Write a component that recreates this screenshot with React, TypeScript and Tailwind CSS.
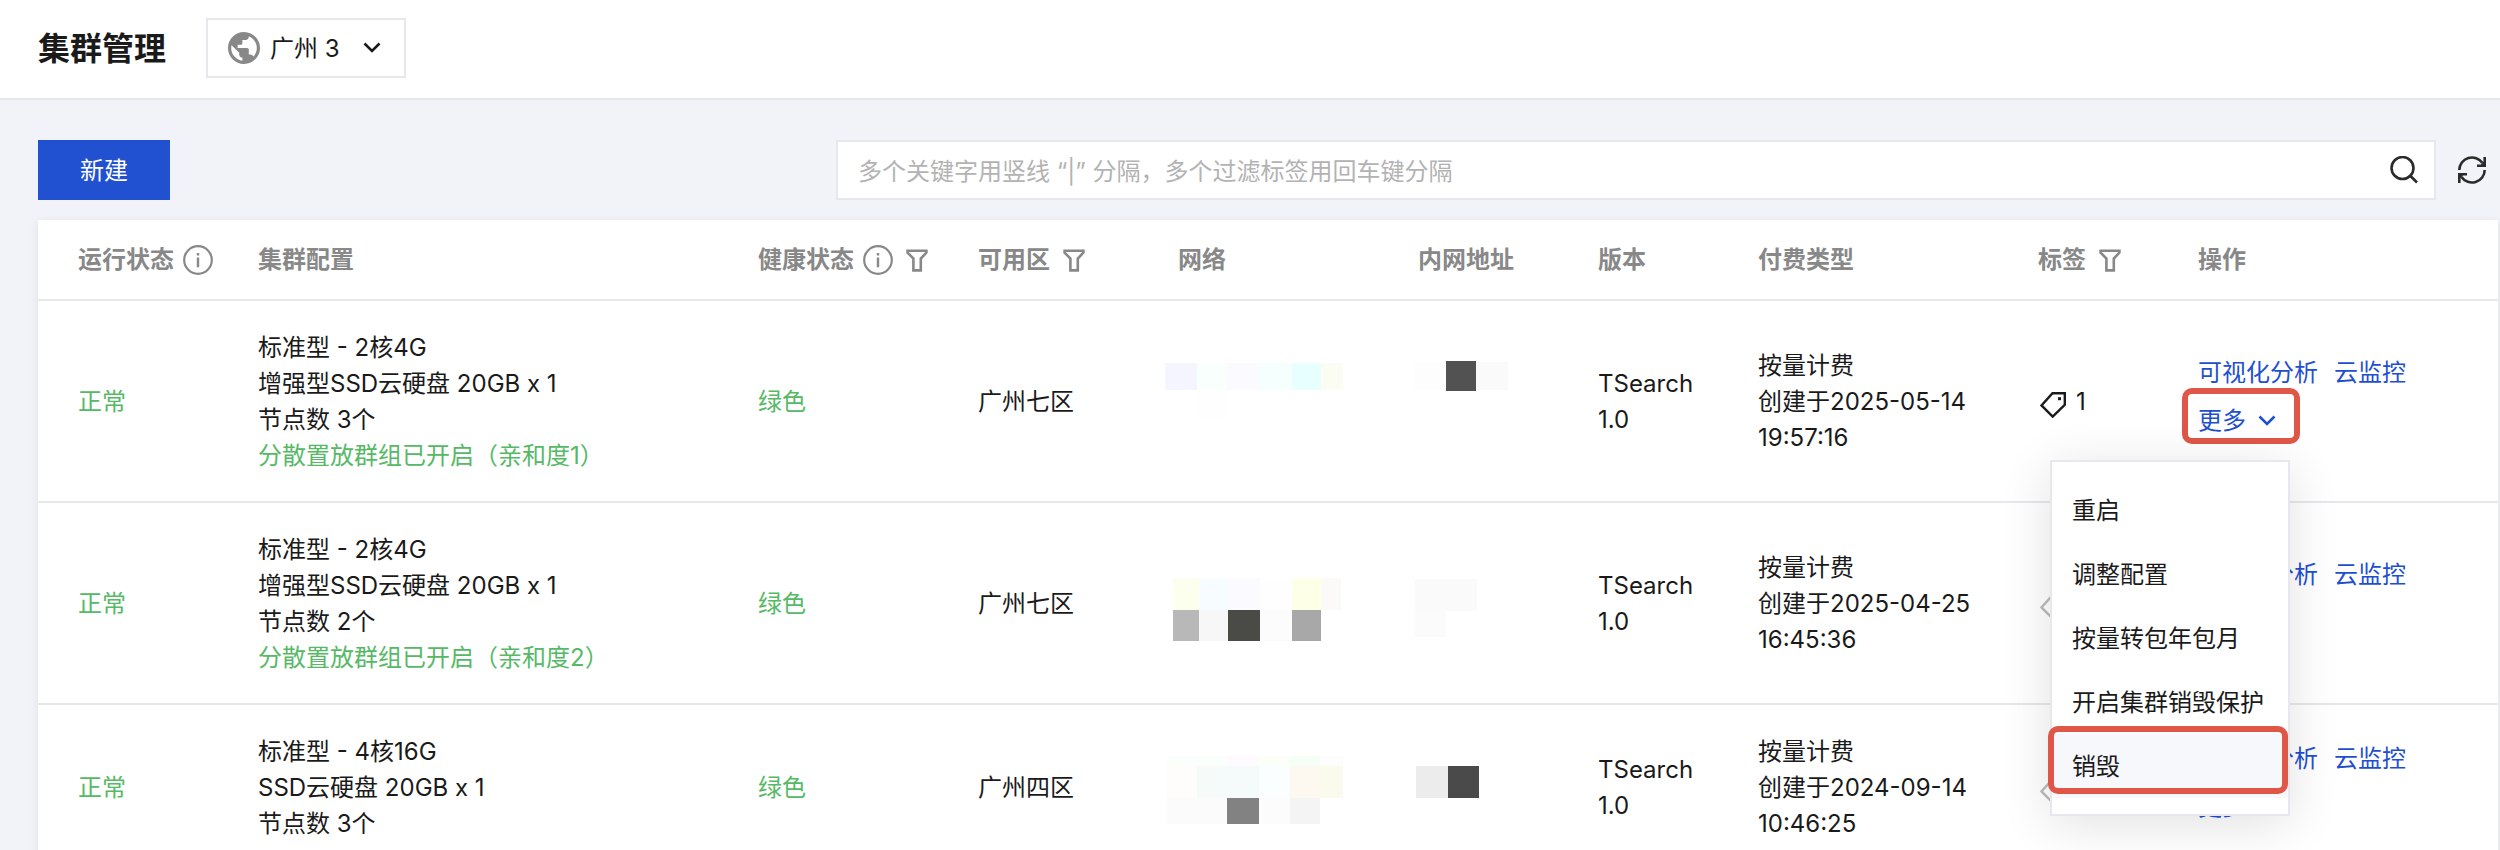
import React from 'react';
import clsx from 'clsx';

interface Block {
  x: number;
  y: number;
  w: number;
  h: number;
  fill: string;
}

interface Cluster {
  id: string;
  status: string;
  config: string[];
  placement?: string;
  health: string;
  zone: string;
  network: Block[];
  address: Block[];
  version: string;
  billing: string;
  createdAt: string;
  tagCount: number;
}

// Masked values: [x, y, width, height, fill]
const toBlocks = (items: [number, number, number, number, string][]): Block[] =>
  items.map(([x, y, w, h, fill]) => ({ x, y, w, h, fill }));

const clusters: Cluster[] = [
  {
    id: 'c1',
    status: '正常',
    config: ['标准型 - 2核4G', '增强型SSD云硬盘 20GB x 1', '节点数 3个'],
    placement: '分散置放群组已开启（亲和度1）',
    health: '绿色',
    zone: '广州七区',
    network: toBlocks([
      [3, 16, 32, 27, '#f5f5ff'],
      [35, 16, 30, 27, '#f9fffc'],
      [65, 16, 32, 27, '#fbfbff'],
      [97, 16, 33, 27, '#f4fffe'],
      [130, 16, 29, 27, '#e8ffff'],
      [159, 16, 22, 27, '#fbfcf4'],
      [35, 43, 30, 31, '#fefefe'],
    ]),
    address: toBlocks([
      [13, 15, 31, 28, '#fdfdfd'],
      [44, 14, 30, 30, '#525252'],
      [74, 15, 32, 28, '#fafafa'],
    ]),
    version: 'TSearch 1.0',
    billing: '按量计费',
    createdAt: '2025-05-14 19:57:16',
    tagCount: 1,
  },
  {
    id: 'c2',
    status: '正常',
    config: ['标准型 - 2核4G', '增强型SSD云硬盘 20GB x 1', '节点数 2个'],
    placement: '分散置放群组已开启（亲和度2）',
    health: '绿色',
    zone: '广州七区',
    network: toBlocks([
      [11, 29, 26, 32, '#fdffee'],
      [37, 29, 29, 32, '#f6fcff'],
      [66, 29, 32, 32, '#fbfaff'],
      [98, 29, 32, 32, '#fefefe'],
      [130, 29, 29, 32, '#fdffe6'],
      [159, 29, 20, 32, '#fbfaf8'],
      [11, 61, 26, 31, '#b8b8b8'],
      [37, 61, 29, 31, '#f7f7f7'],
      [66, 61, 32, 31, '#4a4a47'],
      [98, 61, 32, 31, '#fcfcfc'],
      [130, 61, 29, 31, '#a8a8a8'],
    ]),
    address: toBlocks([
      [13, 30, 31, 32, '#fafafa'],
      [44, 30, 31, 32, '#fafafa'],
      [13, 62, 31, 26, '#fbfbfb'],
    ]),
    version: 'TSearch 1.0',
    billing: '按量计费',
    createdAt: '2025-04-25 16:45:36',
    tagCount: 0,
  },
  {
    id: 'c3',
    status: '正常',
    config: ['标准型 - 4核16G', 'SSD云硬盘 20GB x 1', '节点数 3个'],
    health: '绿色',
    zone: '广州四区',
    network: toBlocks([
      [5, 23, 60, 10, '#fbfffb'],
      [65, 23, 32, 10, '#fefbfe'],
      [97, 23, 31, 10, '#fcfff8'],
      [128, 23, 30, 10, '#f6fff5'],
      [158, 23, 23, 10, '#fdfdfd'],
      [5, 33, 30, 32, '#fffdfb'],
      [35, 33, 30, 32, '#f6fbf9'],
      [65, 33, 32, 32, '#f4fbfa'],
      [97, 33, 31, 32, '#fbfefe'],
      [128, 33, 30, 32, '#fdf9f1'],
      [158, 33, 23, 32, '#fafbed'],
      [5, 65, 60, 26, '#fbfbfb'],
      [65, 65, 32, 26, '#828282'],
      [97, 65, 31, 26, '#fcfcfc'],
      [128, 65, 30, 26, '#f4f4f4'],
    ]),
    address: toBlocks([
      [14, 33, 32, 32, '#ececec'],
      [46, 33, 31, 32, '#4a4a4a'],
    ]),
    version: 'TSearch 1.0',
    billing: '按量计费',
    createdAt: '2024-09-14 10:46:25',
    tagCount: 0,
  },
];

const menuItems = ['重启', '调整配置', '按量转包年包月', '开启集群销毁保护', '销毁'];

const columns = [
  { key: 'status', label: '运行状态', width: 'w-[200px]', info: true },
  { key: 'config', label: '集群配置', width: 'w-[500px]' },
  { key: 'health', label: '健康状态', width: 'w-[220px]', info: true, filter: true },
  { key: 'zone', label: '可用区', width: 'w-[200px]', filter: true },
  { key: 'network', label: '网络', width: 'w-[240px]' },
  { key: 'address', label: '内网地址', width: 'w-[180px]' },
  { key: 'version', label: '版本', width: 'w-[160px]' },
  { key: 'billing', label: '付费类型', width: 'w-[280px]' },
  { key: 'tags', label: '标签', width: 'w-[160px]', filter: true },
  { key: 'actions', label: '操作', width: 'w-[320px]' },
];

const GlobeIcon = () => (
  <svg viewBox="2 2 20 20" className="size-8 shrink-0 text-[#888888]" fill="currentColor" aria-hidden="true">
    <path d="M12 2C6.48 2 2 6.48 2 12s4.48 10 10 10 10-4.48 10-10S17.52 2 12 2zm-1 17.93c-3.95-.49-7-3.85-7-7.93 0-.62.08-1.21.21-1.79L9 15v1c0 1.1.9 2 2 2v1.93zm6.9-2.54c-.26-.81-1-1.39-1.9-1.39h-1v-3c0-.55-.45-1-1-1H8v-2h2c.55 0 1-.45 1-1V7h2c1.1 0 2-.9 2-2v-.41c2.93 1.19 5 4.06 5 7.41 0 2.08-.8 3.97-2.1 5.39z" />
  </svg>
);

const ChevronIcon = ({ className }: { className?: string }) => (
  <svg viewBox="0 0 18 12" className={clsx('h-3 w-[18px] shrink-0', className)} fill="none" stroke="currentColor" strokeWidth="2.6" aria-hidden="true">
    <path d="M1.5 1.5 9 9 16.5 1.5" />
  </svg>
);

const InfoIcon = () => (
  <svg viewBox="0 0 30 30" className="size-[30px] shrink-0" aria-hidden="true">
    <circle cx="15" cy="15" r="13.8" fill="none" stroke="currentColor" strokeWidth="2.2" />
    <path d="M13.8 8h2.4v2.4h-2.4zM13.8 12.6h2.4v9.6h-2.4z" fill="currentColor" />
  </svg>
);

const FilterIcon = () => (
  <svg viewBox="0 0 22 24" className="h-6 w-[22px] shrink-0" fill="none" stroke="currentColor" strokeWidth="2.6" aria-hidden="true">
    <path d="M1.6 2.8h18.8v1.8l-5.6 6v11.8H7.4V10.6l-5.8-6z" />
  </svg>
);

const SearchIcon = () => (
  <svg viewBox="0 0 28 28" className="size-7" fill="none" stroke="currentColor" strokeWidth="2.6" aria-hidden="true">
    <circle cx="12.5" cy="12" r="11" />
    <path d="M20 19.5 27 26.5" />
  </svg>
);

const RefreshIcon = () => (
  <svg viewBox="0 0 28 28" className="size-7" aria-hidden="true">
    <g fill="none" stroke="currentColor" strokeWidth="2.6">
      <path d="M1.3 14A12.7 12.7 0 0 1 24.5 7" />
      <path d="M26.7 14A12.7 12.7 0 0 1 3.5 21" />
    </g>
    <g fill="currentColor">
      <path d="M28 1v10h-9V8.4h4L25.4 6V1z" />
      <path d="M0 27V17h9v2.6H5L2.6 22v5z" />
    </g>
  </svg>
);

const TagIcon = () => (
  <svg viewBox="0 0 28 32" className="h-8 w-7 shrink-0" aria-hidden="true">
    <path d="M14.5 7.2h12.3v11.6L14.7 30.6 3.5 19.4z" fill="none" stroke="currentColor" strokeWidth="2.4" />
    <path d="M20 11.2h3v3h-3z" fill="currentColor" />
  </svg>
);

function Mosaic({ blocks, label, width }: { blocks: Block[]; label: string; width: number }) {
  return (
    <svg width={width} height="108" role="img" aria-label={label} className="block">
      {blocks.map((b) => (
        <rect key={`${b.x}-${b.y}`} x={b.x} y={b.y} width={b.w} height={b.h} fill={b.fill} />
      ))}
    </svg>
  );
}

function MoreMenu() {
  return (
    <div
      role="menu"
      className="absolute -left-[148px] top-[63px] z-10 w-[240px] border-2 border-[#e7e8ee] bg-white py-4 text-[#1a1a1a] shadow-[0_8px_48px_rgba(0,0,0,0.12)]"
    >
      {menuItems.map((item) => {
        const active = item === '销毁';
        return (
          <button
            key={item}
            type="button"
            role="menuitem"
            className={clsx('relative block h-16 w-full whitespace-nowrap px-5 pt-0.5 text-left', active && 'bg-[#f6f8fc]')}
          >
            {item}
            {active && (
              <span className="pointer-events-none absolute -left-1 -top-2 bottom-1 right-0 rounded-[10px] border-[6px] border-[#df5747]" />
            )}
          </button>
        );
      })}
    </div>
  );
}

function RowActions({ open }: { open: boolean }) {
  return (
    <div className="pb-2 leading-[48px] text-[#1f4fd1]">
      <div className="flex gap-4 whitespace-nowrap">
        <a href="#analysis">可视化分析</a>
        <a href="#monitor">云监控</a>
      </div>
      <div className="relative w-fit">
        <button type="button" aria-haspopup="menu" aria-expanded={open} className="flex items-center gap-3">
          更多
          <ChevronIcon />
        </button>
        {open && (
          <>
            <span className="pointer-events-none absolute -left-4 -top-[9px] h-14 w-[118px] rounded-[10px] border-[6px] border-[#df5747]" />
            <MoreMenu />
          </>
        )}
      </div>
    </div>
  );
}

function ClusterTable() {
  return (
    <table className="w-full table-fixed border-collapse bg-white text-left shadow-[0_2px_8px_rgba(54,58,80,0.1)]">
      <thead className="text-[#888888]">
        <tr className="border-b-2 border-[#e7e8ee]">
          {columns.map((col, i) => (
            <th
              key={col.key}
              scope="col"
              className={clsx('h-20 whitespace-nowrap font-semibold', col.width, i === 0 ? 'pl-10' : 'pl-5')}
            >
              <div className="flex items-center">
                {col.label}
                {col.info && (
                  <button type="button" aria-label={`${col.label}说明`} className="ml-[9px]">
                    <InfoIcon />
                  </button>
                )}
                {col.filter && (
                  <button type="button" aria-label={`筛选${col.label}`} className="ml-[13px]">
                    <FilterIcon />
                  </button>
                )}
              </div>
            </th>
          ))}
        </tr>
      </thead>
      <tbody className="text-[#1a1a1a]">
        {clusters.map((c, i) => (
          <tr key={c.id} className="border-b-2 border-[#e7e8ee]">
            {/* Status */}
            <td className="pb-[27px] pl-10 pt-[29px] text-[#56b966]">{c.status}</td>

            {/* Config */}
            <td className="pb-[27px] pl-5 pt-[29px]">
              {c.config.map((line) => (
                <div key={line}>{line}</div>
              ))}
              {c.placement && <div className="text-[#56b966]">{c.placement}</div>}
            </td>

            {/* Health */}
            <td className="pb-[27px] pl-5 pt-[29px] text-[#56b966]">{c.health}</td>

            {/* Zone */}
            <td className="pb-[27px] pl-5 pt-[29px]">{c.zone}</td>

            {/* Network */}
            <td className="py-7 pl-1">
              <Mosaic blocks={c.network} label="网络" width={184} />
            </td>

            {/* Address */}
            <td className="py-7 pl-1">
              <Mosaic blocks={c.address} label="内网地址" width={120} />
            </td>

            {/* Version */}
            <td className="px-5 pb-[27px] pt-[29px]">{c.version}</td>

            {/* Billing */}
            <td className="px-5 pb-[27px] pt-[29px]">
              <div>{c.billing}</div>
              <div>{`创建于${c.createdAt}`}</div>
            </td>

            {/* Tags */}
            <td className="pb-[27px] pl-5 pt-[29px]">
              <div className={clsx('flex items-center gap-[10px]', c.tagCount === 0 && 'text-[#bbbbbb]')}>
                <TagIcon />
                {c.tagCount > 0 && c.tagCount}
              </div>
            </td>

            {/* Actions */}
            <td className="pl-5">
              <RowActions open={i === 0} />
            </td>
          </tr>
        ))}
      </tbody>
    </table>
  );
}

export default function App() {
  return (
    <div
      lang="zh-CN"
      className="flex h-screen flex-col overflow-hidden bg-[#f2f3f8] font-['Inter','Noto_Sans_CJK_SC',sans-serif] text-[24px] leading-[36px] text-[#1a1a1a]"
    >
      <header className="flex shrink-0 items-center gap-10 border-b-2 border-[#e5e7ec] bg-white px-[38px] pb-5 pt-[18px]">
        <h1 className="pt-0.5 text-[32px] font-bold leading-[48px]">集群管理</h1>
        <div className="relative flex h-[60px] w-[200px] items-center gap-[10px] border-2 border-[#e7e8ee] pl-5">
          <GlobeIcon />
          <select aria-label="地域" defaultValue="gz" className="h-full min-w-0 flex-1 appearance-none bg-transparent pt-0.5 outline-none">
            <option value="gz">广州 3</option>
          </select>
          <ChevronIcon className="pointer-events-none absolute right-[23px]" />
        </div>
      </header>

      <main className="pl-[38px] pr-[2px] pt-10">
        <div className="mb-5 flex items-center justify-between pr-3">
          <button type="button" className="h-[60px] w-[132px] shrink-0 bg-[#2151d1] pt-0.5 text-white">
            新建
          </button>
          <div className="flex min-w-0 items-center gap-[22px]">
            <div className="flex h-[60px] w-[1600px] min-w-0 shrink items-center border-2 border-[#e7e8ee] bg-white pl-5 pr-4">
              <input
                type="text"
                aria-label="搜索集群"
                placeholder="多个关键字用竖线 “|” 分隔，多个过滤标签用回车键分隔"
                className="h-full min-w-0 flex-1 bg-transparent pt-0.5 outline-none placeholder:text-[#b3b3b3]"
              />
              <button type="button" aria-label="搜索" className="text-[#2b2b2b]">
                <SearchIcon />
              </button>
            </div>
            <button type="button" aria-label="刷新" className="shrink-0 text-[#2b2b2b]">
              <RefreshIcon />
            </button>
          </div>
        </div>

        <ClusterTable />
      </main>
    </div>
  );
}
